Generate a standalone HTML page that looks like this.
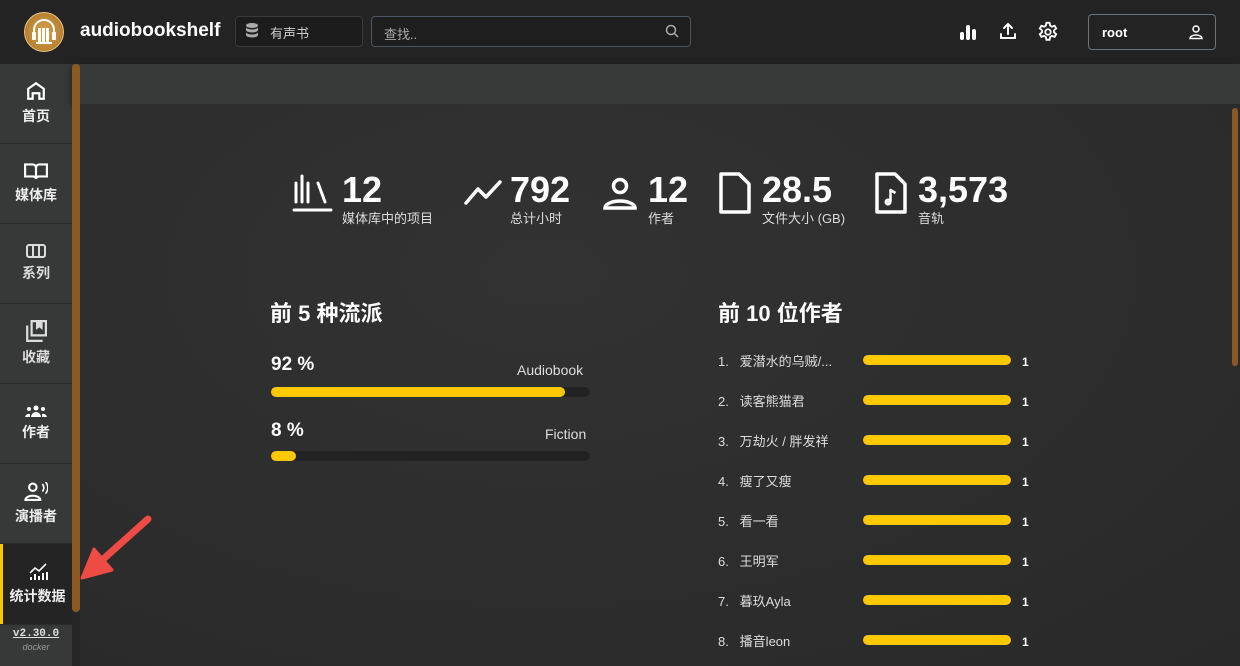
<!DOCTYPE html>
<html><head><meta charset="utf-8"><style>
*{margin:0;padding:0;box-sizing:border-box}
html,body{width:1240px;height:666px;overflow:hidden}
body{background:#2b2b2b;font-family:"Liberation Sans","Noto Sans CJK SC",sans-serif;color:#fff;position:relative}
.top{position:absolute;left:0;top:0;width:1240px;height:64px;background:#232323}
.side{position:absolute;left:0;top:64px;width:72px;height:602px;background:#373938}
.item{height:80px;border-bottom:1px solid #2a2a2a;display:flex;flex-direction:column;align-items:center;justify-content:center;font-size:14px;font-weight:bold;color:#eee}
.item svg{margin-bottom:5px}
.band{position:absolute;left:72px;top:64px;width:1168px;height:40px;background:#383a39;box-shadow:0 3px 6px rgba(0,0,0,.5)}
.main{position:absolute;left:80px;top:104px;width:1160px;height:562px;background:radial-gradient(ellipse at 40% 30%,#323232,#292929)}
.stat{position:absolute;top:170px;display:flex;align-items:flex-start}
.num{font-size:36px;font-weight:bold;line-height:40px}
.lbl{font-size:13px;color:#ddd;margin-top:-2px}
.bar{height:10px;border-radius:5px;background:#222}
.fill{height:10px;border-radius:5px;background:#fcc800}
.row{position:absolute;left:718px;font-size:13px;color:#ddd}
</style></head><body>
<div class="top">
 <div style="position:absolute;left:24px;top:12px;width:40px;height:40px;border-radius:50%;background:radial-gradient(circle,#d9a24b,#a8722a);border:1px solid #e8c27a"></div>
 <svg style="position:absolute;left:30px;top:17px" width="28" height="30" viewBox="0 0 28 30"><path d="M4 17 V13 a10 10 0 0 1 20 0 V17" fill="none" stroke="#fff" stroke-width="2"/><rect x="2" y="15" width="4" height="8" rx="1" fill="#fff"/><rect x="22" y="15" width="4" height="8" rx="1" fill="#fff"/><rect x="8" y="11" width="3" height="14" fill="#fff"/><rect x="12" y="11" width="3" height="14" fill="#fff"/><rect x="16" y="11" width="3" height="14" fill="#fff"/><rect x="6" y="25" width="16" height="2" fill="#fff"/></svg>
 <div style="position:absolute;left:80px;top:20px;font-size:19px;font-weight:bold">audiobookshelf</div>
 <div style="position:absolute;left:235px;top:16px;width:128px;height:31px;border:1px solid #3a3a3a;border-radius:4px;background:#1c1c1c;font-size:13px;color:#ccc;padding:6px 0 0 34px">有声书</div>
 <svg style="position:absolute;left:245px;top:22px" width="14" height="18" viewBox="0 0 14 18"><ellipse cx="7" cy="3.5" rx="6" ry="2.5" fill="#aaa"/><path d="M1 5 v3 a6 2.5 0 0 0 12 0 v-3 a6 2.5 0 0 1 -12 0z M1 10 v3 a6 2.5 0 0 0 12 0 v-3 a6 2.5 0 0 1 -12 0z" fill="#aaa"/></svg>
 <div style="position:absolute;left:371px;top:16px;width:320px;height:31px;border:1px solid #4b5563;border-radius:4px;background:#1e1e1e;font-size:13px;color:#aaa;padding:7px 0 0 12px">查找..</div>
 <svg style="position:absolute;left:665px;top:24px" width="14" height="14" viewBox="0 0 14 14"><circle cx="6" cy="6" r="4.5" fill="none" stroke="#aaa" stroke-width="1.5"/><path d="M9.5 9.5 13 13" stroke="#aaa" stroke-width="1.5"/></svg>
 <svg style="position:absolute;left:959px;top:24px" width="18" height="16" viewBox="0 0 18 16"><rect x="1" y="8" width="4" height="8" rx="2" fill="#fff"/><rect x="7" y="1" width="4" height="15" rx="2" fill="#fff"/><rect x="13" y="5" width="4" height="11" rx="2" fill="#fff"/></svg>
 <svg style="position:absolute;left:999px;top:22px" width="18" height="18" viewBox="0 0 18 18" fill="none" stroke="#fff" stroke-width="2" stroke-linecap="round"><path d="M2 12v4h14v-4M9 12V2M5 6l4-4 4 4"/></svg>
 <svg style="position:absolute;left:1037px;top:21px" width="22" height="22" viewBox="0 0 24 24" fill="none" stroke="#fff" stroke-width="2"><path d="M10.3 2h3.4l.6 3 2 1.2 2.9-1 1.7 2.9-2.3 2v2.3l2.3 2-1.7 2.9-2.9-1-2 1.2-.6 3h-3.4l-.6-3-2-1.2-2.9 1-1.7-2.9 2.3-2v-2.3l-2.3-2 1.7-2.9 2.9 1 2-1.2z"/><circle cx="12" cy="12" r="3"/></svg>
 <div style="position:absolute;left:1088px;top:14px;width:128px;height:36px;border:1px solid #6b7280;border-radius:4px;font-size:13px;font-weight:bold;padding:10px 0 0 13px">root</div>
 <svg style="position:absolute;left:1188px;top:24px" width="16" height="16" viewBox="0 0 16 16" fill="none" stroke="#fff" stroke-width="1.5"><circle cx="8" cy="5" r="3"/><path d="M2 14.5 a6 3.5 0 0 1 12 0z"/></svg>
</div>
<div class="side">
 <div class="item"><svg width="20" height="20" viewBox="0 0 18 18" fill="none" stroke="#fff" stroke-width="2"><path d="M2 16V7l7-5 7 5v9h-4v-5H6v5z"/></svg>首页</div>
 <div class="item"><svg width="24" height="18" viewBox="0 0 22 16" fill="none" stroke="#fff" stroke-width="2"><path d="M1 2h7a3 3 0 0 1 3 3v10a3 3 0 0 0-3-2H1zM21 2h-7a3 3 0 0 0-3 3v10a3 3 0 0 1 3-2h7z"/></svg>媒体库</div>
 <div class="item" style="color:#ddd"><svg width="20" height="14" viewBox="0 0 20 14" fill="none" stroke="#ddd" stroke-width="2"><rect x="1" y="1" width="18" height="12" rx="2"/><path d="M7 1v12M13 1v12"/></svg>系列</div>
 <div class="item" style="color:#ddd"><svg width="22" height="22" viewBox="0 0 20 20" fill="none" stroke="#ddd" stroke-width="2"><path d="M6 1h13v13H6zM2 5v14h14"/><path d="M11 1v6l2-1.5 2 1.5V1" fill="#ddd"/></svg>收藏</div>
 <div class="item"><svg width="22" height="12" viewBox="0 0 22 12" fill="#fff"><circle cx="11" cy="3" r="2.5"/><circle cx="4" cy="4" r="2"/><circle cx="18" cy="4" r="2"/><path d="M6 12a5 5 0 0 1 10 0zM0 12a4 4 0 0 1 5-3v3zM22 12a4 4 0 0 0-5-3v3z"/></svg>作者</div>
 <div class="item"><svg width="24" height="19" viewBox="0 0 22 18" fill="none" stroke="#fff" stroke-width="2"><circle cx="8" cy="5" r="3.5"/><path d="M1 17a7 4 0 0 1 14 0z"/><path d="M17 2a5 5 0 0 1 0 7M20 0a8 8 0 0 1 0 11" stroke-width="1.5"/></svg>演播者</div>
 <div class="item" style="background:#242424;border-left:3px solid #fcc800;border-bottom:none"><svg width="20" height="18" viewBox="0 0 20 18" fill="none" stroke="#fff" stroke-width="2"><path d="M2 10l5-5 4 3 7-7" stroke-width="1.6"/><path d="M3 17v-3M7 17v-6M11 17v-4M15 17v-7M19 17V9"/></svg>统计数据</div>
 <div style="text-align:center;padding-top:3px;border-top:1px solid #2a2a2a"><div style="font-family:'Liberation Mono',monospace;font-size:11px;text-decoration:underline;color:#ddd;font-weight:bold">v2.30.0</div><div style="font-size:9px;font-style:italic;color:#999;margin-top:2px">docker</div></div>
</div>
<div style="position:absolute;left:72px;top:64px;width:8px;height:602px;background:#262626"></div>
<div style="position:absolute;left:72px;top:64px;width:8px;height:548px;border-radius:4px;background:#8a5a22;z-index:3"></div>
<div class="band"></div>
<div class="main"></div>
<div style="position:absolute;left:1232px;top:108px;width:6px;height:258px;border-radius:3px;background:#8a5a22"></div>

<div class="stat" style="left:292px"><svg width="42" height="44" viewBox="0 0 42 44" fill="none" stroke="#fff" stroke-width="3" stroke-linecap="round"><path d="M4 13v19M10 6v26M16 13v19M26 13l7 19M2 40h37"/></svg><div style="margin-left:8px"><div class="num">12</div><div class="lbl">媒体库中的项目</div></div></div>
<div class="stat" style="left:463px"><svg width="40" height="40" viewBox="0 0 40 40" fill="none" stroke="#fff" stroke-width="3.5" stroke-linejoin="round" stroke-linecap="round"><path d="M3 33l12-14 8 8L37 12"/></svg><div style="margin-left:7px"><div class="num">792</div><div class="lbl">总计小时</div></div></div>
<div class="stat" style="left:602px"><svg width="36" height="44" viewBox="0 0 36 44" fill="none" stroke="#fff" stroke-width="3.5"><circle cx="18" cy="16" r="6.5"/><path d="M3 38a15 7 0 0 1 30 0z"/></svg><div style="margin-left:10px"><div class="num">12</div><div class="lbl">作者</div></div></div>
<div class="stat" style="left:718px"><svg width="34" height="46" viewBox="0 0 34 46" fill="none" stroke="#fff" stroke-width="3.5" stroke-linejoin="round"><path d="M3 4h18l10 10v28H3z"/></svg><div style="margin-left:10px"><div class="num">28.5</div><div class="lbl">文件大小 (GB)</div></div></div>
<div class="stat" style="left:874px"><svg width="34" height="46" viewBox="0 0 34 46" fill="none" stroke="#fff" stroke-width="3.5" stroke-linejoin="round"><path d="M3 4h18l10 10v28H3z"/><circle cx="14" cy="32" r="3" fill="#fff" stroke-width="1"/><path d="M16.5 32V20l5 3" stroke-width="2.5"/></svg><div style="margin-left:10px"><div class="num">3,573</div><div class="lbl">音轨</div></div></div>

<div style="position:absolute;left:270px;top:296px;font-size:22px;font-weight:bold">前 5 种流派</div>
<div style="position:absolute;left:271px;top:354px;font-size:19px;font-weight:bold">92 %</div>
<div style="position:absolute;left:517px;top:362px;font-size:14px;color:#ddd">Audiobook</div>
<div class="bar" style="position:absolute;left:271px;top:387px;width:319px"><div class="fill" style="width:294px"></div></div>
<div style="position:absolute;left:271px;top:420px;font-size:19px;font-weight:bold">8 %</div>
<div style="position:absolute;left:545px;top:426px;font-size:14px;color:#ddd">Fiction</div>
<div class="bar" style="position:absolute;left:271px;top:451px;width:319px"><div class="fill" style="width:25px"></div></div>

<div style="position:absolute;left:718px;top:296px;font-size:22px;font-weight:bold">前 10 位作者</div>
<div class="row" style="top:351px">1.&nbsp;&nbsp;&nbsp;爱潜水的乌贼/...</div>
<div class="row" style="top:391px">2.&nbsp;&nbsp;&nbsp;读客熊猫君</div>
<div class="row" style="top:431px">3.&nbsp;&nbsp;&nbsp;万劫火 / 胖发祥</div>
<div class="row" style="top:471px">4.&nbsp;&nbsp;&nbsp;瘦了又瘦</div>
<div class="row" style="top:511px">5.&nbsp;&nbsp;&nbsp;看一看</div>
<div class="row" style="top:551px">6.&nbsp;&nbsp;&nbsp;王明军</div>
<div class="row" style="top:591px">7.&nbsp;&nbsp;&nbsp;暮玖Ayla</div>
<div class="row" style="top:631px">8.&nbsp;&nbsp;&nbsp;播音leon</div>
<div style="position:absolute;left:863px;top:355px">
 <div class="fill" style="width:148px;margin-bottom:30px"></div><div class="fill" style="width:148px;margin-bottom:30px"></div><div class="fill" style="width:148px;margin-bottom:30px"></div><div class="fill" style="width:148px;margin-bottom:30px"></div><div class="fill" style="width:148px;margin-bottom:30px"></div><div class="fill" style="width:148px;margin-bottom:30px"></div><div class="fill" style="width:148px;margin-bottom:30px"></div><div class="fill" style="width:148px"></div>
</div>
<div style="position:absolute;left:1022px;top:342px;font-size:12px;font-weight:bold;line-height:40px">1<br>1<br>1<br>1<br>1<br>1<br>1<br>1</div>

<svg style="position:absolute;left:0;top:0;z-index:5" width="1240" height="666"><path d="M148 519 L100 562" stroke="#ef4b45" stroke-width="7" stroke-linecap="round"/><path d="M82 578 L94 549 L112 570z" fill="#ef4b45" stroke="#ef4b45" stroke-width="3" stroke-linejoin="round"/></svg>
</body></html>
